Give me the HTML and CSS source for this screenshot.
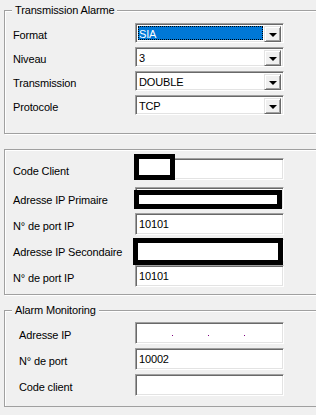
FILE: index.html
```html
<!doctype html>
<html>
    <head>
        <title>Alarme</title>
        <link rel="stylesheet" href="styles.css">
    </head>
    <body>

        <div class="group g1">
            <span class="legend">Transmission Alarme</span>
            <div class="row">
                <span class="label">Format</span>
                <div class="combo focus">
                    <span class="value"><span class="sel">SIA</span></span>
                    <span class="btn"><span class="arrow"></span></span>
                </div>
            </div>
            <div class="row">
                <span class="label">Niveau</span>
                <div class="combo">
                    <span class="value">3</span>
                    <span class="btn"><span class="arrow"></span></span>
                </div>
            </div>
            <div class="row">
                <span class="label">Transmission</span>
                <div class="combo">
                    <span class="value">DOUBLE</span>
                    <span class="btn"><span class="arrow"></span></span>
                </div>
            </div>
            <div class="row">
                <span class="label">Protocole</span>
                <div class="combo">
                    <span class="value">TCP</span>
                    <span class="btn"><span class="arrow"></span></span>
                </div>
            </div>
        </div>

        <div class="group g2">
            <div class="row r-first">
                <span class="label">Code Client</span>
                <div class="field">
                    <span class="mask m-code"></span>
                </div>
            </div>
            <div class="row">
                <span class="label">Adresse IP Primaire</span>
                <div class="field">
                    <span class="mask m-ip1"></span>
                </div>
            </div>
            <div class="row">
                <span class="label">N° de port IP</span>
                <div class="field">10101</div>
            </div>
            <div class="row">
                <span class="label">Adresse IP Secondaire</span>
                <div class="field">
                    <span class="mask m-ip2"></span>
                </div>
            </div>
            <div class="row">
                <span class="label">N° de port IP</span>
                <div class="field">10101</div>
            </div>
        </div>

        <div class="group g3">
            <span class="legend">Alarm Monitoring</span>
            <div class="row">
                <span class="label">Adresse IP</span>
                <div class="field ip">
                    <span class="dot"></span><span class="dot"></span><span class="dot"></span>
                </div>
            </div>
            <div class="row">
                <span class="label">N° de port</span>
                <div class="field">10002</div>
            </div>
            <div class="row">
                <span class="label">Code client</span>
                <div class="field"></div>
            </div>
        </div>

    </body>
</html>
```

FILE: styles.css
```css
body {
margin: 0;
background-color: #f0f0f0;
font-family: "Liberation Sans", Arial, sans-serif;
font-size: 11px;
letter-spacing: -0.15px;
color: #000;
}

.group {
position: relative;
margin-left: 4px;
width: 306px;
border: 1px solid #a0a0a0;
box-shadow: inset 1px 1px 0 #fff, 1px 1px 0 #fff;
display: flex;
flex-direction: column;
}

.legend {
position: absolute;
top: -8px;
left: 7px;
padding: 0 3px 0 3px;
background-color: #f0f0f0;
line-height: 15px;
}

.g1 {
margin-top: 10px;
padding: 12px 0 18px 8px;
gap: 4px;
}

.g2 {
margin-top: 15px;
padding: 8px 0 7px 8px;
gap: 4px;
}

.g2 .r-first {margin-bottom: 3px;}

.g3 {
margin-top: 15px;
padding: 11px 0 10px 14px;
gap: 4px;
}

.row {
display: flex;
align-items: center;
}

.label {
width: 122px;
padding-top: 3px;
}

.g3 .label {width: 116px;}

.combo, .field {
position: relative;
box-sizing: border-box;
width: 149px;
background-color: #fff;
border-top: 1px solid #a0a0a0;
border-left: 1px solid #a0a0a0;
border-right: 1px solid #fff;
border-bottom: 1px solid #fff;
box-shadow: inset 1px 1px 0 #696969, inset -1px -1px 0 #e3e3e3;
}

.combo {
height: 20px;
display: flex;
padding: 2px 2px 2px 2px;
}

.combo .value {
flex: 1;
line-height: 16px;
padding-left: 1px;
display: flex;
}

.combo.focus .value {
padding: 0 1px 0 0;
}

.sel {
flex: 1;
background-color: #0078d7;
color: #fff;
padding-left: 1px;
outline: 1px dotted #000;
outline-offset: -1px;
line-height: 16px;
}

.btn {
width: 17px;
height: 16px;
box-sizing: border-box;
background-color: #f0f0f0;
border-top: 1px solid #e3e3e3;
border-left: 1px solid #e3e3e3;
border-right: 1px solid #696969;
border-bottom: 1px solid #696969;
box-shadow: inset 1px 1px 0 #fff, inset -1px -1px 0 #a0a0a0;
display: flex;
align-items: center;
justify-content: center;
}

.arrow {
width: 0;
height: 0;
border-left: 4px solid transparent;
border-right: 4px solid transparent;
border-top: 4px solid #000;
margin-top: 1px;
}

.field {
height: 22px;
line-height: 20px;
padding-left: 3px;
}

.mask {
position: absolute;
background-color: #fff;
border: 5px solid #000;
box-sizing: border-box;
}

.m-code {
left: -2px;
top: -5px;
width: 41px;
height: 26px;
}

.m-ip1 {
left: -2px;
top: 2px;
width: 148px;
height: 19px;
}

.m-ip2 {
left: -3px;
top: -2px;
width: 150px;
height: 27px;
}

.ip {
display: flex;
align-items: center;
padding-left: 36px;
gap: 35px;
}

.dot {
width: 1px;
height: 1px;
margin-top: 5px;
background-color: #800080;
}
```
